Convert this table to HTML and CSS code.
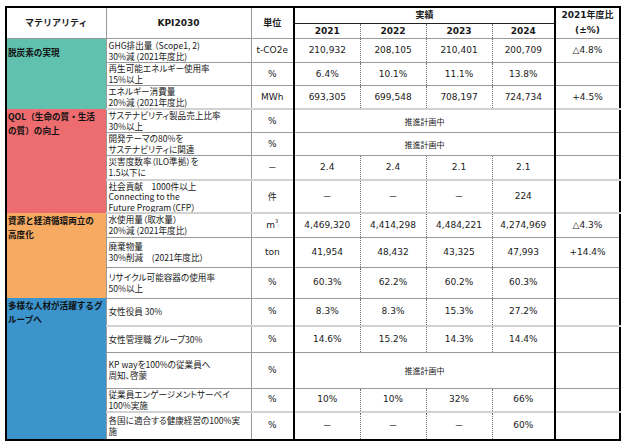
FILE: index.html
```html
<!DOCTYPE html>
<html lang="ja">
<head>
<meta charset="utf-8">
<title>KPI2030</title>
<link rel="stylesheet" href="styles.css">
</head>
<body>
<div class="sheet">
<table class="kpi">
  <colgroup>
    <col class="c-mat"><col class="c-kpi"><col class="c-unit">
    <col class="c-y1"><col class="c-y2"><col class="c-y3"><col class="c-y4"><col class="c-ratio">
  </colgroup>
  <thead>
    <tr class="h16">
      <th class="hd jp" rowspan="2">マテリアリティ</th>
      <th class="hd" rowspan="2">KPI2030</th>
      <th class="hd jp u" rowspan="2">単位</th>
      <th class="hd jp res" colspan="4">実績</th>
      <th class="hd ratio jpnum" rowspan="2">2021年度比<br>(±%)</th>
    </tr>
    <tr class="h15">
      <th class="hd y">2021</th>
      <th class="hd y">2022</th>
      <th class="hd y">2023</th>
      <th class="hd y">2024</th>
    </tr>
  </thead>
  <tbody>
    <tr class="h24">
      <td class="mat g1 first" rowspan="3">脱炭素の実現</td>
      <td class="kt">GHG排出量 （Scope1, 2)<br>30%減 (2021年度比)</td>
      <td class="u">t-CO2e</td>
      <td class="y">210,932</td><td class="y">208,105</td><td class="y">210,401</td><td class="y">200,709</td>
      <td class="ratio">△4.8%</td>
    </tr>
    <tr class="h23">
      <td class="kt">再生可能エネルギー使用率<br>15%以上</td>
      <td class="u">%</td>
      <td class="y">6.4%</td><td class="y">10.1%</td><td class="y">11.1%</td><td class="y">13.8%</td>
      <td class="ratio"></td>
    </tr>
    <tr class="h22">
      <td class="kt">エネルギー消費量<br>20%減 (2021年度比)</td>
      <td class="u">MWh</td>
      <td class="y">693,305</td><td class="y">699,548</td><td class="y">708,197</td><td class="y">724,734</td>
      <td class="ratio">+4.5%</td>
    </tr>
    <tr class="h23 soft">
      <td class="mat g2" rowspan="4">QOL（生命の質・生活<br>の質）の向上</td>
      <td class="kt">サステナビリティ製品売上比率<br>30%以上</td>
      <td class="u">%</td>
      <td class="y plan" colspan="4">推進計画中</td>
      <td class="ratio"></td>
    </tr>
    <tr class="h22">
      <td class="kt">開発テーマの80%を<br>サステナビリティに関連</td>
      <td class="u">%</td>
      <td class="y plan" colspan="4">推進計画中</td>
      <td class="ratio"></td>
    </tr>
    <tr class="h24">
      <td class="kt">災害度数率（ILO準拠）を<br>1.5以下に</td>
      <td class="u dash">－</td>
      <td class="y">2.4</td><td class="y">2.4</td><td class="y">2.1</td><td class="y">2.1</td>
      <td class="ratio"></td>
    </tr>
    <tr class="h32 soft">
      <td class="kt tight">社会貢献　1000件以上<br>Connecting to the<br>Future Program（CFP）</td>
      <td class="u jp">件</td>
      <td class="y dash">－</td><td class="y dash">－</td><td class="y dash">－</td><td class="y">224</td>
      <td class="ratio"></td>
    </tr>
    <tr class="h24 soft">
      <td class="mat g3" rowspan="3">資源と経済循環両立の<br>高度化</td>
      <td class="kt">水使用量（取水量）<br>20%減 (2021年度比)</td>
      <td class="u">m<sup class="cube">3</sup></td>
      <td class="y">4,469,320</td><td class="y">4,414,298</td><td class="y">4,484,221</td><td class="y">4,274,969</td>
      <td class="ratio">△4.3%</td>
    </tr>
    <tr class="h30">
      <td class="kt">廃棄物量<br>30%削減　(2021年度比）</td>
      <td class="u">ton</td>
      <td class="y">41,954</td><td class="y">48,432</td><td class="y">43,325</td><td class="y">47,993</td>
      <td class="ratio">+14.4%</td>
    </tr>
    <tr class="h31">
      <td class="kt">リサイクル可能容器の使用率<br>50%以上</td>
      <td class="u">%</td>
      <td class="y">60.3%</td><td class="y">62.2%</td><td class="y">60.2%</td><td class="y">60.3%</td>
      <td class="ratio"></td>
    </tr>
    <tr class="h28">
      <td class="mat g4" rowspan="5">多様な人材が活躍するグ<br>ループへ</td>
      <td class="kt">女性役員 30%</td>
      <td class="u">%</td>
      <td class="y">8.3%</td><td class="y">8.3%</td><td class="y">15.3%</td><td class="y">27.2%</td>
      <td class="ratio"></td>
    </tr>
    <tr class="h26 soft">
      <td class="kt">女性管理職 グループ30%</td>
      <td class="u">%</td>
      <td class="y">14.6%</td><td class="y">15.2%</td><td class="y">14.3%</td><td class="y">14.4%</td>
      <td class="ratio"></td>
    </tr>
    <tr class="h36">
      <td class="kt">KP wayを100%の従業員へ<br>周知、啓蒙</td>
      <td class="u">%</td>
      <td class="y plan" colspan="4">推進計画中</td>
      <td class="ratio"></td>
    </tr>
    <tr class="h22">
      <td class="kt">従業員エンゲージメントサーベイ<br>100%実施</td>
      <td class="u">%</td>
      <td class="y">10%</td><td class="y">10%</td><td class="y">32%</td><td class="y">66%</td>
      <td class="ratio"></td>
    </tr>
    <tr class="h28 soft">
      <td class="kt">各国に適合する健康経営の100%実<br>施</td>
      <td class="u">%</td>
      <td class="y dash">－</td><td class="y dash">－</td><td class="y dash">－</td><td class="y">60%</td>
      <td class="ratio"></td>
    </tr>
  </tbody>
</table>
</div>
</body>
</html>
```

FILE: styles.css
```css
html, body {
  margin: 0;
  padding: 0;
  background: #ffffff;
}

body {
  font-family: "DejaVu Sans", "Noto Sans CJK JP", sans-serif;
  color: #1a1a1a;
}

.sheet {
  padding: 6px 0 0 5px;
}

.kpi {
  border-collapse: collapse;
  table-layout: fixed;
  width: 614px;
  border: 2px solid #000;
}

.c-mat { width: 100px; }
.c-kpi { width: 145px; }
.c-unit { width: 43px; }
.c-y1 { width: 66px; }
.c-y2 { width: 66px; }
.c-y3 { width: 66px; }
.c-y4 { width: 63px; }
.c-ratio { width: 65px; }

.kpi th,
.kpi td {
  border: 1px solid #9a9a9a;
  padding: 0 2px;
  font-size: 9px;
  line-height: 11px;
  text-align: center;
  vertical-align: middle;
  white-space: nowrap;
  overflow: hidden;
  font-weight: normal;
}

.h15 { height: 15px; }
.h16 { height: 16px; }
.h22 { height: 22px; }
.h23 { height: 23px; }
.h24 { height: 24px; }
.h26 { height: 26px; }
.h28 { height: 28px; }
.h30 { height: 30px; }
.h31 { height: 31px; }
.h32 { height: 32px; }
.h36 { height: 36px; }

.jp {
  font-family: "Noto Sans CJK JP", sans-serif;
}

.kpi th.hd {
  font-weight: bold;
  font-size: 9px;
  line-height: 14px;
}

.kpi th.jp {
  font-family: "Noto Sans CJK JP", sans-serif;
  font-size: 9px;
}

.kpi th.jpnum {
  font-family: "DejaVu Sans", "Noto Sans CJK JP", sans-serif;
  line-height: 15px;
}

.kpi th.res {
  border-bottom: 1px solid #222;
}

.kpi .y {
  border-left: 1px dotted #6e6e6e;
  border-right: 1px dotted #6e6e6e;
}

.kpi .u {
  border-right: 2px solid #000;
}

.kpi .ratio {
  border-left: 2px solid #000;
}

.kpi .kt {
  text-align: left;
  font-family: "Noto Sans CJK JP", sans-serif;
  font-feature-settings: "palt";
  font-size: 8.6px;
  line-height: 11px;
  padding-left: 2px;
}

.kpi .kt.tight {
  line-height: 10.5px;
}

.kpi .mat {
  text-align: left;
  vertical-align: top;
  font-family: "Noto Sans CJK JP", sans-serif;
  font-weight: bold;
  font-size: 8.6px;
  line-height: 14px;
  padding: 0 0 0 1px;
  border-top: none;
  border-bottom: none;
  color: #111;
}

.kpi .mat.first {
  padding-top: 6px;
}

.g1 { background: #5fc1ae; }
.g2 { background: #ec6c6f; }
.g3 { background: #f7aa62; }
.g4 { background: #3b94cc; }

.kpi .soft td:not(.mat) {
  border-top: 2px solid #d2d2d2;
}

.kpi .plan {
  font-family: "Noto Sans CJK JP", sans-serif;
  font-size: 8px;
}

.kpi .dash {
  font-family: "Noto Sans CJK JP", sans-serif;
}

.cube {
  font-size: 5px;
  vertical-align: 5px;
  line-height: 0;
}
```
